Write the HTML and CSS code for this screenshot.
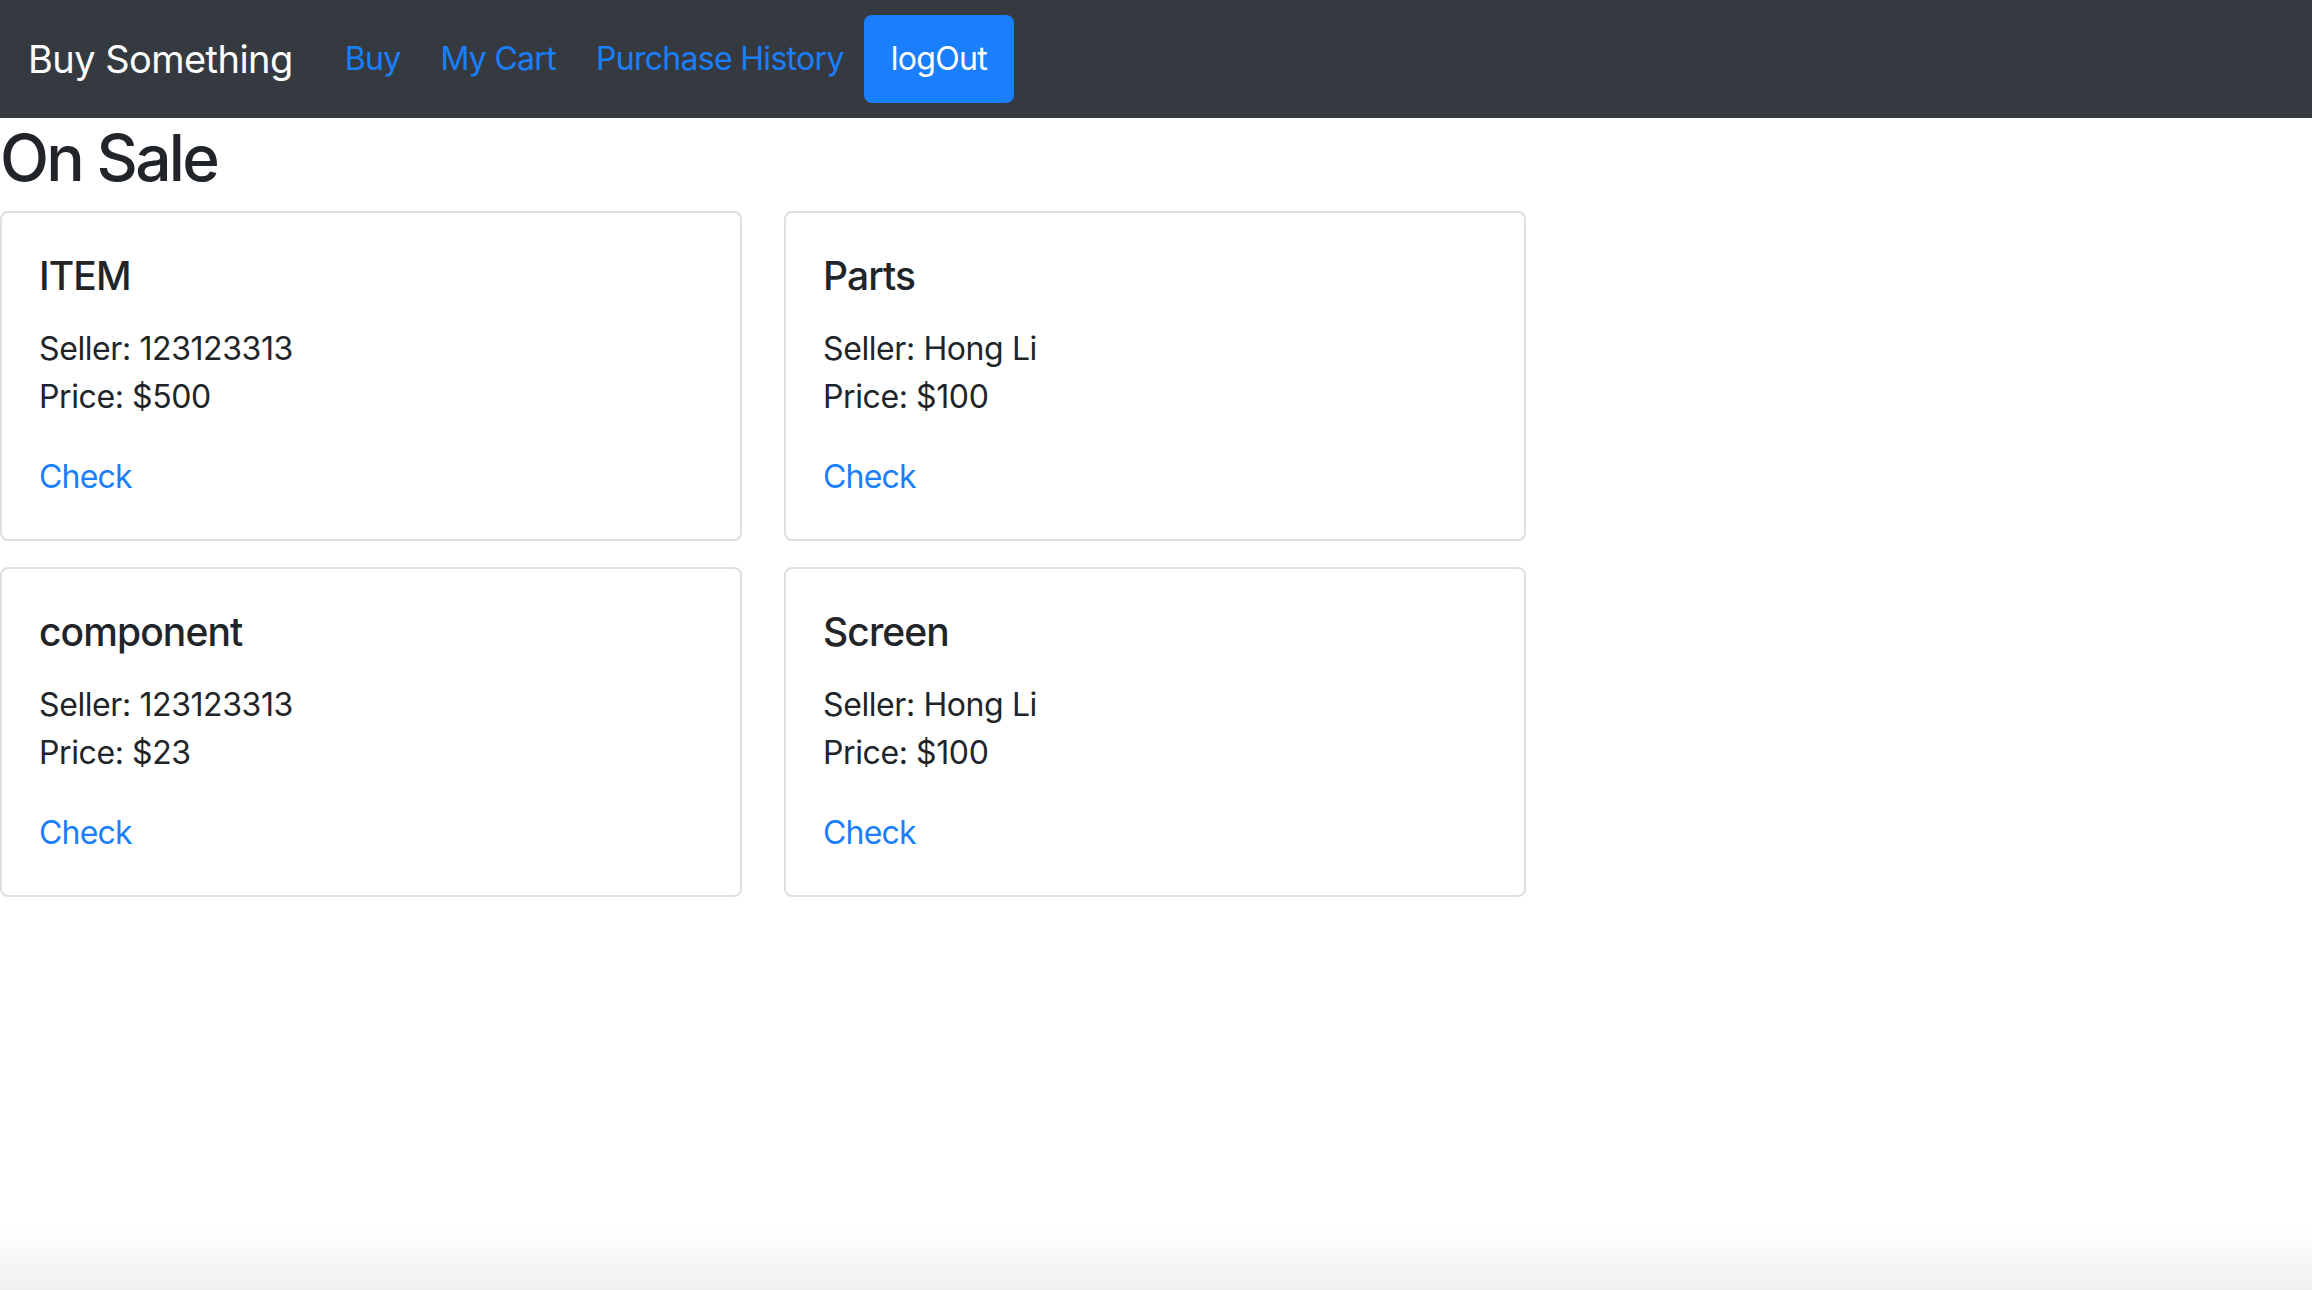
FILE: index.html
```html
<!DOCTYPE html>
<html lang="en">
<head>
<meta charset="utf-8">
<title>Buy Something</title>
<link rel="stylesheet" href="styles.css">
</head>
<body>
<nav class="navbar">
  <a class="brand" href="#">Buy Something</a>
  <a class="nav-link" href="#">Buy</a>
  <a class="nav-link" href="#">My Cart</a>
  <a class="nav-link" href="#">Purchase History</a>
  <button class="btn-logout" type="button">logOut</button>
</nav>
<main class="content">
  <h2 class="page-title">On Sale</h2>
  <div class="card-grid">
    <div class="card">
      <h5 class="card-title">ITEM</h5>
      <p class="card-text">Seller: 123123313<br>Price: $500</p>
      <a class="card-link" href="#">Check</a>
    </div>
    <div class="card">
      <h5 class="card-title">Parts</h5>
      <p class="card-text">Seller: Hong Li<br>Price: $100</p>
      <a class="card-link" href="#">Check</a>
    </div>
    <div class="card">
      <h5 class="card-title">component</h5>
      <p class="card-text">Seller: 123123313<br>Price: $23</p>
      <a class="card-link" href="#">Check</a>
    </div>
    <div class="card">
      <h5 class="card-title">Screen</h5>
      <p class="card-text">Seller: Hong Li<br>Price: $100</p>
      <a class="card-link" href="#">Check</a>
    </div>
  </div>
</main>
</body>
</html>
```
FILE: styles.css
```css
html {
  min-height: 100%;
  background: linear-gradient(to bottom, #ffffff calc(100% - 64px), #f0f0f0 100%);
}
body {
  margin: 0;
  font-family: Inter, "Noto Sans", sans-serif;
  color: #212529;
}
a { text-decoration: none; }

.navbar {
  display: flex;
  align-items: center;
  height: 118px;
  padding: 0 0 0 28px;
  background: #353a41;
}
.brand {
  font-size: 38px;
  line-height: 57px;
  letter-spacing: -0.55px;
  color: #ffffff;
  margin-right: 32px;
}
.nav-link {
  font-size: 32px;
  line-height: 48px;
  letter-spacing: -0.7px;
  padding: 0 20px;
  color: #1a7ffc;
}
.btn-logout {
  font-family: inherit;
  font-size: 32px;
  line-height: 48px;
  letter-spacing: -0.7px;
  height: 88px;
  padding: 0 27px;
  border: 0;
  border-radius: 8px;
  background: #1a7ffc;
  color: #ffffff;
}

.content { padding: 0; }
.page-title {
  margin: 1px 0 15px 0;
  font-size: 64px;
  line-height: 77px;
  font-weight: 500;
  letter-spacing: -2.7px;
}
.card-grid {
  display: grid;
  grid-template-columns: 742px 742px;
  column-gap: 42px;
  row-gap: 26px;
}
.card {
  border: 2px solid #dfdfdf;
  border-radius: 8px;
  padding: 39px 37px 38px 37px;
}
.card-title {
  margin: 0 0 26px 0;
  font-size: 39px;
  line-height: 47px;
  font-weight: 500;
  letter-spacing: -0.9px;
}
.card-text {
  margin: 0 0 32px 0;
  font-size: 32px;
  line-height: 48px;
  letter-spacing: -0.4px;
}
.card-link {
  display: block;
  font-size: 32px;
  line-height: 48px;
  letter-spacing: -0.8px;
  color: #1a7ffc;
}
```
